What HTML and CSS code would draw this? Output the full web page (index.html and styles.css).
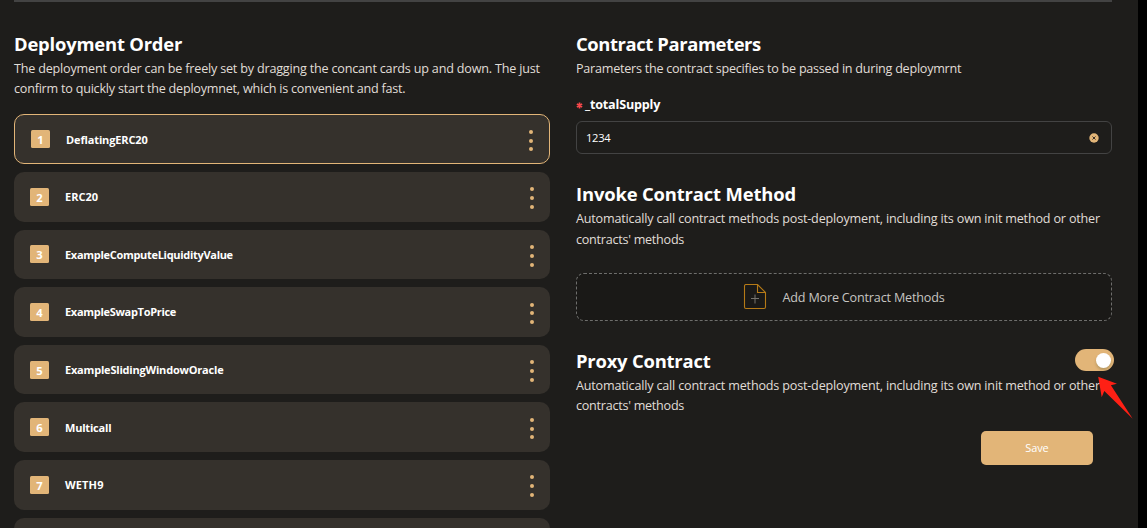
FILE: index.html
```html
<!DOCTYPE html>
<html lang="en">
<head>
<meta charset="utf-8">
<title>Deployment Order</title>
<link rel="stylesheet" href="styles.css">
</head>
<body>
<main class="page">
  <div class="columns">
    <section class="order">
      <h2 class="title t-order">Deployment Order</h2>
      <p class="desc"><span class="d1">The deployment order can be freely set by dragging the concant cards up and down. The just</span><br><span class="d2">confirm to quickly start the deploymnet, which is convenient and fast.</span></p>
      <div class="cards">
        <div class="card active"><span class="num">1</span><span class="name n1">DeflatingERC20</span><span class="dots"><i></i><i></i><i></i></span></div>
        <div class="card"><span class="num">2</span><span class="name n2">ERC20</span><span class="dots"><i></i><i></i><i></i></span></div>
        <div class="card"><span class="num">3</span><span class="name n3">ExampleComputeLiquidityValue</span><span class="dots"><i></i><i></i><i></i></span></div>
        <div class="card"><span class="num">4</span><span class="name n4">ExampleSwapToPrice</span><span class="dots"><i></i><i></i><i></i></span></div>
        <div class="card"><span class="num">5</span><span class="name n5">ExampleSlidingWindowOracle</span><span class="dots"><i></i><i></i><i></i></span></div>
        <div class="card"><span class="num">6</span><span class="name n6">Multicall</span><span class="dots"><i></i><i></i><i></i></span></div>
        <div class="card"><span class="num">7</span><span class="name n7">WETH9</span><span class="dots"><i></i><i></i><i></i></span></div>
        <div class="card"></div>
      </div>
    </section>
    <section class="settings">
      <h2 class="title t-params">Contract Parameters</h2>
      <p class="desc"><span class="d3">Parameters the contract specifies to be passed in during deploymrnt</span></p>
      <div class="label"><svg class="star" viewBox="0 0 8 8"><path d="M4 .6V7.4M1 2.3L7 5.7M7 2.3L1 5.7"/></svg><span class="label-text">_totalSupply</span></div>
      <div class="input"><span class="value">1234</span>
        <svg class="clear" viewBox="0 0 10 10"><circle cx="5" cy="5" r="4.7"/><path d="M3.5 3.5L6.5 6.5M6.5 3.5L3.5 6.5"/></svg>
      </div>
      <h2 class="title t-invoke">Invoke Contract Method</h2>
      <p class="desc loose"><span class="d4">Automatically call contract methods post-deployment, including its own init method or other</span><br><span class="d5">contracts' methods</span></p>
      <div class="add">
        <svg class="file" viewBox="0 0 24 26"><path class="sheet" d="M14.500 .5H3A1.500 1.500 0 0 0 1.500 2V23A1.500 1.500 0 0 0 3 24.500H21A1.500 1.500 0 0 0 22.500 23V8.500L14.500 .5V8.500H22.500"/><path class="plus" d="M12 10.500V19.500M8 14.500H16"/></svg>
        <span class="add-text">Add More Contract Methods</span>
      </div>
      <div class="proxy-head"><h2 class="title t-proxy">Proxy Contract</h2><span class="switch"><i class="knob"></i></span></div>
      <p class="desc"><span class="d4">Automatically call contract methods post-deployment, including its own init method or other</span><br><span class="d5">contracts' methods</span></p>
      <button class="save">Save</button>
    </section>
  </div>
  <svg class="arrow" viewBox="0 0 36 44"><path d="M1.200 .8L20 7.700L13.900 9.300L35.700 42.700L7.300 15L4.700 21.300Z"/></svg>
</main>
</body>
</html>
```

FILE: styles.css
```css
* { box-sizing: border-box; }
body {
  margin: 0;
  background: #000;
  overflow: hidden;
  font-family: "Open Sans", "Noto Sans", sans-serif;
}
.page {
  position: relative;
  width: 1138px;
  height: 528px;
  padding: 0 26px 0 14px;
  background: #1e1d1b;
  overflow: hidden;
}
.columns {
  display: grid;
  grid-template-columns: 536px 536px;
  gap: 26px;
  border-top: 2px solid #434343;
  padding-top: 30px;
}
.title {
  margin: 0 0 3px;
  color: #fff;
  font-size: 18.4px;
  line-height: 24px;
  font-weight: 700;
  white-space: nowrap;
}
.t-order { letter-spacing: -.19px; }
.t-params { letter-spacing: -.39px; }
.t-invoke { padding-top: 28px; margin-bottom: 2px; letter-spacing: -.15px; }
.t-proxy { letter-spacing: -.2px; }
.desc {
  margin: 0;
  color: #e0ddd8;
  font-size: 12.6px;
  line-height: 20px;
  white-space: nowrap;
}
.loose { line-height: 21px; }
.d1 { letter-spacing: -.196px; }
.d2 { letter-spacing: -.225px; }
.d3 { letter-spacing: -.25px; }
.d4 { letter-spacing: -.187px; }
.d5 { letter-spacing: -.26px; }
.cards {
  display: flex;
  flex-direction: column;
  gap: 8px;
  padding-top: 15.4px;
}
.card {
  display: flex;
  align-items: center;
  height: 49.6px;
  padding: 0 16px;
  border-radius: 10px;
  background: #35312c;
}
.active { border: 1px solid #e2b578; }
.num {
  width: 19px;
  height: 18px;
  border-radius: 1.500px;
  background: #e2b578;
  color: #fff;
  font-size: 11.200px;
  line-height: 19px;
  font-weight: 700;
  text-align: center;
}
.name {
  padding: 1px 0 0 16px;
  color: #fff;
  font-size: 11px;
  line-height: 18px;
  font-weight: 700;
}
.n1 { letter-spacing: -.13px; }
.n3 { letter-spacing: -.3px; }
.n4 { letter-spacing: -.3px; }
.n5 { letter-spacing: -.2px; }
.n6 { letter-spacing: -.2px; }
.n7 { letter-spacing: .15px; }
.dots {
  display: flex;
  flex-direction: column;
  gap: 4.800px;
  margin-left: auto;
  padding-top: 3px;
}
.dots i {
  width: 4px;
  height: 4px;
  border-radius: 50%;
  background: #e2b578;
}
.label {
  display: flex;
  align-items: center;
  padding: 16px 0 6px;
  color: #fff;
  font-size: 12.600px;
  line-height: 20px;
  font-weight: 700;
}
.label-text { letter-spacing: -.2px; }
.star { width: 7px; height: 7px; margin-right: 2px; fill: none; stroke: #f8484b; stroke-width: 1.900; }
.input {
  display: flex;
  align-items: center;
  justify-content: space-between;
  height: 33px;
  padding: 0 12px 0 9px;
  border: 1px solid #434343;
  border-radius: 6px;
  color: #fff;
  font-size: 11.200px;
}
.value { letter-spacing: -.3px; }
.clear { width: 10px; height: 10px; }
.clear circle { fill: #e2b578; }
.clear path { stroke: #3a3027; stroke-width: 1; }
.add {
  display: flex;
  align-items: center;
  justify-content: center;
  gap: 15px;
  height: 48px;
  margin-top: 23px;
  border: 1px dashed #6e6e6c;
  border-radius: 8px;
  background: #1a1917;
  color: #c7c5c2;
  font-size: 12.600px;
}
.add-text { letter-spacing: -.18px; }
.file { width: 24px; height: 26px; fill: none; }
.sheet { stroke: #b57a17; stroke-width: 1.100; }
.plus { stroke: #77746e; stroke-width: 1; }
.proxy-head {
  display: flex;
  justify-content: space-between;
  align-items: flex-start;
  padding-top: 28px;
}
.switch {
  display: flex;
  justify-content: flex-end;
  width: 39px;
  height: 22px;
  margin-right: -2px;
  padding: 3.500px 3px;
  border-radius: 11px;
  background: #e2b578;
}
.knob {
  width: 15px;
  height: 15px;
  border-radius: 50%;
  background: #fff;
  box-shadow: 0 2px 3px rgba(0, 35, 11, .2);
}
.save {
  display: block;
  width: 112px;
  height: 34px;
  margin: 15px 19px 0 auto;
  padding: 0 0 2px;
  border: 0;
  border-radius: 5px;
  background: #e2b578;
  color: #fff;
  font: 11px "Open Sans", "Noto Sans", sans-serif;
  letter-spacing: -.1px;
}
.arrow {
  position: absolute;
  left: 1097px;
  top: 376px;
  width: 36px;
  height: 44px;
  fill: #ff2015;
}
```
